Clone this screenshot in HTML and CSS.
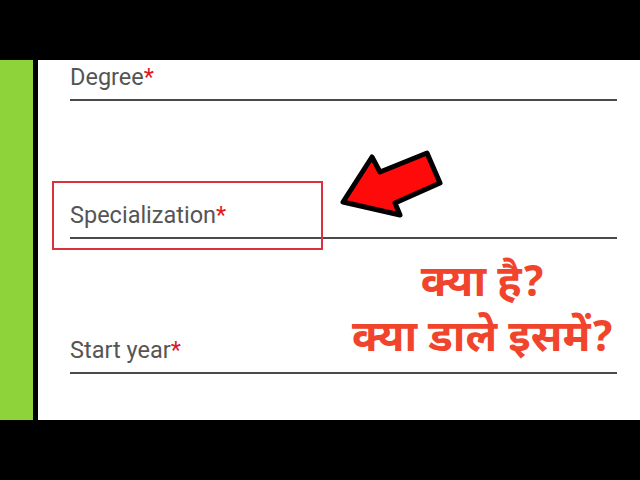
FILE: index.html
```html
<!DOCTYPE html>
<html lang="hi">
<head>
<meta charset="utf-8">
<link rel="stylesheet" href="styles.css">
</head>
<body>
<div class="screen">
  <div class="bar"></div>
  <div class="middle">
    <div class="green"></div>
    <div class="divider"></div>
    <div class="content">
      <div class="field"><span class="label">Degree<span class="req">*</span></span></div>
      <div class="field field-spec"><span class="label">Specialization<span class="req">*</span></span></div>
      <div class="field field-start"><span class="label">Start year<span class="req">*</span></span></div>
      <div class="highlight"></div>
      <svg class="arrow" width="120" height="85" viewBox="0 0 120 85">
        <polygon points="13,62 42,17 50,32 97,13 110,43 65,63 70,75" fill="#ff0a0a" stroke="#000" stroke-width="5" stroke-linejoin="round"/>
      </svg>
      <div class="question">
        <div>क्या है?</div>
        <div>क्या डाले इसमें?</div>
      </div>
    </div>
  </div>
  <div class="bar"></div>
</div>
</body>
</html>
```
FILE: styles.css
```css
html, body {
  margin: 0;
  padding: 0;
  background: #000;
}
.screen {
  width: 640px;
  height: 480px;
  display: flex;
  flex-direction: column;
}
.bar {
  height: 60px;
  background: #000;
}
.middle {
  height: 360px;
  display: flex;
}
.green {
  width: 33px;
  background: #8fd33a;
}
.divider {
  width: 5px;
  background: #000;
}
.content {
  flex: 1;
  background: #fff;
  position: relative;
  padding: 3px 23px 0 32px;
  box-sizing: border-box;
  font-family: Roboto, "Liberation Sans", sans-serif;
}
.field {
  border-bottom: 2px solid #4a4a4a;
  padding-bottom: 8px;
}
.field-spec {
  margin-top: 100px;
}
.field-start {
  margin-top: 97px;
}
.label {
  display: block;
  font-size: 23.5px;
  line-height: 28px;
  color: #555;
}
.req {
  color: #e3161c;
}
.highlight {
  position: absolute;
  left: 14px;
  top: 121px;
  width: 271px;
  height: 69px;
  box-sizing: border-box;
  border: 2px solid #d8333a;
}
.arrow {
  position: absolute;
  left: 292px;
  top: 80px;
}
.question {
  position: absolute;
  left: 300px;
  width: 290px;
  top: 198px;
  text-align: center;
  font-family: "Noto Sans Devanagari", "Noto Sans", sans-serif;
  font-weight: 700;
  font-size: 43px;
  line-height: 55px;
  color: #f0452c;
}
```
